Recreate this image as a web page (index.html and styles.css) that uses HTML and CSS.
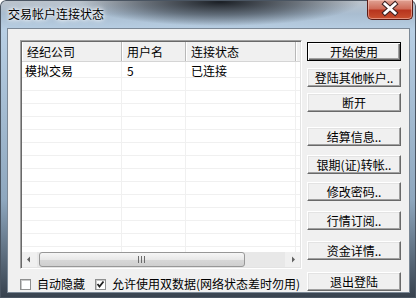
FILE: index.html
```html
<!DOCTYPE html>
<html lang="zh-CN">

<head>
  <meta charset="UTF-8">
  <title>交易帐户连接状态</title>
  <link rel="stylesheet" href="styles.css">
</head>

<body>
  <div class="window">
    <div class="titlebar">
      <span class="title">交易帐户连接状态</span>
      <div class="close">
        <svg width="46" height="20" viewBox="0 0 46 20">
          <path d="M18 5 L28 14 M28 5 L18 14" stroke="#3a2020" stroke-width="5" stroke-linecap="square" />
          <path d="M18 5 L28 14 M28 5 L18 14" stroke="#fff" stroke-width="3" stroke-linecap="square" />
        </svg>
      </div>
    </div>

    <div class="client">
      <div class="main">
        <div class="listview">
          <div class="lv-header">
            <div class="hd">经纪公司</div>
            <div class="hd">用户名</div>
            <div class="hd">连接状态</div>
            <div class="hd"></div>
          </div>
          <div class="lv-body">
            <div class="row first">
              <div class="cell">模拟交易</div>
              <div class="cell pad">5</div>
              <div class="cell pad">已连接</div>
              <div class="cell"></div>
            </div>
            <div class="row"><div class="cell"></div><div class="cell"></div><div class="cell"></div><div class="cell"></div></div>
            <div class="row"><div class="cell"></div><div class="cell"></div><div class="cell"></div><div class="cell"></div></div>
            <div class="row"><div class="cell"></div><div class="cell"></div><div class="cell"></div><div class="cell"></div></div>
            <div class="row"><div class="cell"></div><div class="cell"></div><div class="cell"></div><div class="cell"></div></div>
            <div class="row"><div class="cell"></div><div class="cell"></div><div class="cell"></div><div class="cell"></div></div>
            <div class="row"><div class="cell"></div><div class="cell"></div><div class="cell"></div><div class="cell"></div></div>
            <div class="row"><div class="cell"></div><div class="cell"></div><div class="cell"></div><div class="cell"></div></div>
            <div class="row"><div class="cell"></div><div class="cell"></div><div class="cell"></div><div class="cell"></div></div>
            <div class="row"><div class="cell"></div><div class="cell"></div><div class="cell"></div><div class="cell"></div></div>
            <div class="row"><div class="cell"></div><div class="cell"></div><div class="cell"></div><div class="cell"></div></div>
            <div class="row"><div class="cell"></div><div class="cell"></div><div class="cell"></div><div class="cell"></div></div>
            <div class="row"><div class="cell"></div><div class="cell"></div><div class="cell"></div><div class="cell"></div></div>
            <div class="row"><div class="cell"></div><div class="cell"></div><div class="cell"></div><div class="cell"></div></div>
            <div class="row"><div class="cell"></div><div class="cell"></div><div class="cell"></div><div class="cell"></div></div>
          </div>
          <div class="hscroll">
            <div class="arrow">
              <svg width="15" height="15" viewBox="0 0 15 15"><path d="M5 7.5 L8 4.5 L8 10.5 Z" fill="#606060" /></svg>
            </div>
            <div class="track">
              <div class="thumb">
                <svg width="8" height="7" viewBox="0 0 8 7"><path d="M0.5 0 V7 M3.5 0 V7 M6.5 0 V7" stroke="#6b6b6b" stroke-width="1" /></svg>
              </div>
            </div>
            <div class="arrow">
              <svg width="15" height="15" viewBox="0 0 15 15"><path d="M10 7.5 L7 4.5 L7 10.5 Z" fill="#606060" /></svg>
            </div>
          </div>
        </div>

        <div class="options">
          <label class="check"><span class="box"></span>自动隐藏</label>
          <label class="check"><span class="box">
              <svg width="9" height="9" viewBox="0 0 9 9"><path d="M1.5 4 L3.5 6.5 L7.5 1.5" stroke="#222" stroke-width="1.8" fill="none" /></svg>
            </span>允许使用双数据(网络状态差时勿用)</label>
        </div>
      </div>

      <div class="side">
        <button class="btn default">开始使用</button>
        <button class="btn g7">登陆其他帐户..</button>
        <button class="btn g6">断开</button>
        <button class="btn g15">结算信息..</button>
        <button class="btn g9">银期(证)转帐..</button>
        <button class="btn g8">修改密码..</button>
        <button class="btn g10">行情订阅..</button>
        <button class="btn g11">资金详情..</button>
        <button class="btn g12">退出登陆</button>
      </div>
    </div>
  </div>
</body>

</html>
```

FILE: styles.css
```css
* {
  box-sizing: border-box;
}

body {
  margin: 0;
  font-family: "Noto Sans CJK SC", "Liberation Sans", sans-serif;
  font-size: 12px;
  color: #000;
}

.window {
  position: relative;
  width: 416px;
  height: 298px;
  display: flex;
  flex-direction: column;
  padding: 0 7px 6px 8px;
  border-radius: 6px 6px 0 0;
  background:
    radial-gradient(ellipse 140px 24px at 220px 2px, rgba(18, 22, 28, 0.95), rgba(40, 46, 54, 0.55) 55%, rgba(0, 0, 0, 0) 100%),
    linear-gradient(to right, rgba(60, 70, 82, 0) 0, rgba(0, 0, 0, 0) 100%),
    linear-gradient(to bottom, #bdc4cb 0, #a9bdd0 14px, #b8cfe4 30px, #8ea7be 200px, #37414d 298px);
  box-shadow: inset 0 0 0 1px #4a5562;
}

.titlebar {
  height: 29px;
  flex: none;
}

.title {
  display: inline-block;
  padding-top: 6px;
  line-height: 16px;
  color: #000;
  text-shadow: 0 0 6px #fff, 0 0 4px #fff, 0 0 2px #e8eef4;
}

.close {
  position: absolute;
  top: 0;
  right: 3px;
  width: 46px;
  height: 20px;
  border: 1px solid #5a1c16;
  border-top: none;
  border-radius: 0 0 5px 5px;
  background: linear-gradient(to bottom, #e0a293 0, #cf6d5a 45%, #b8351e 55%, #c8502f 100%);
  box-shadow: inset 0 0 0 1px rgba(255, 210, 200, 0.5);
}

.close svg {
  display: block;
  margin: -1px 0 0 -1px;
}

.client {
  flex: 1;
  display: flex;
  padding: 11px 8px 0 12px;
  background: #f0f0f0;
  box-shadow: 0 0 0 1px #7b8896;
}

.main {
  width: 282px;
  flex: none;
}

.listview {
  height: 229px;
  display: flex;
  flex-direction: column;
  background: #fff;
  border: 1px solid;
  border-color: #a0a0a0 #fff #fff #a0a0a0;
  box-shadow: inset 1px 1px 0 #696969, inset -1px -1px 0 #e3e3e3;
  padding: 1px;
}

.lv-header,
.row {
  display: grid;
  grid-template-columns: 100px 64px 110px 1fr;
}

.lv-header {
  height: 20px;
  flex: none;
  background: #f0f0f0;
  border-bottom: 1px solid #d5d5d5;
}

.hd {
  padding-left: 5px;
  line-height: 19px;
  border-right: 1px solid #b8b8b8;
  box-shadow: inset 1px 0 0 #fff;
}

.hd:last-child {
  border-right: none;
}

.lv-body {
  flex: 1;
  overflow: hidden;
}

.row {
  height: 13px;
  border-bottom: 1px solid #f0f0f0;
}

.row.first {
  height: 16px;
}

.cell {
  border-right: 1px solid #f0f0f0;
  padding-left: 3px;
  line-height: 16px;
  padding-top: 1px;
  white-space: nowrap;
}

.cell.pad {
  padding-left: 5px;
}

.cell:last-child {
  border-right: none;
}

.hscroll {
  height: 15px;
  flex: none;
  display: flex;
  background: #f0f0f0;
}

.arrow {
  width: 15px;
  height: 15px;
}

.arrow svg {
  display: block;
}

.track {
  flex: 1;
  padding: 0 40px 0 2px;
  background: #e8e8e8;
}

.thumb {
  height: 15px;
  display: flex;
  align-items: center;
  justify-content: center;
  border: 1px solid #979797;
  border-radius: 3px;
  background: linear-gradient(to bottom, #f6f6f6 0, #e8e8e8 50%, #d8d8d8 51%, #cfcfcf 100%);
}

.thumb svg {
  display: block;
}

.options {
  display: flex;
  align-items: center;
  gap: 10px;
  margin-top: 8px;
  white-space: nowrap;
}

.check {
  display: flex;
  align-items: center;
  gap: 6px;
  line-height: 14px;
}

.box {
  width: 11px;
  height: 11px;
  display: flex;
  align-items: center;
  justify-content: center;
  background: #fff;
  border: 1px solid #8e8f8f;
  box-shadow: inset 1px 1px 0 #c8c8c8;
}

.box svg {
  display: block;
}

.side {
  width: 94px;
  flex: none;
  margin-left: 5px;
  padding-top: 2px;
  display: flex;
  flex-direction: column;
}

.btn {
  height: 19px;
  padding: 0;
  font: inherit;
  line-height: 16px;
  color: #000;
  background: #f0f0f0;
  border: 1px solid;
  border-color: #fff #696969 #696969 #fff;
  box-shadow: inset -1px -1px 0 #a0a0a0, inset 1px 1px 0 #e3e3e3;
  white-space: nowrap;
}

.btn.default {
  border: 1px solid #000;
  box-shadow: inset 1px 1px 0 #fff, inset -1px -1px 0 #696969, inset -2px -2px 0 #a0a0a0;
}

.g6 { margin-top: 6px; }
.g7 { margin-top: 7px; }
.g8 { margin-top: 8px; }
.g9 { margin-top: 9px; }
.g10 { margin-top: 10px; }
.g11 { margin-top: 11px; }
.g12 { margin-top: 12px; }
.g15 { margin-top: 15px; }
```
